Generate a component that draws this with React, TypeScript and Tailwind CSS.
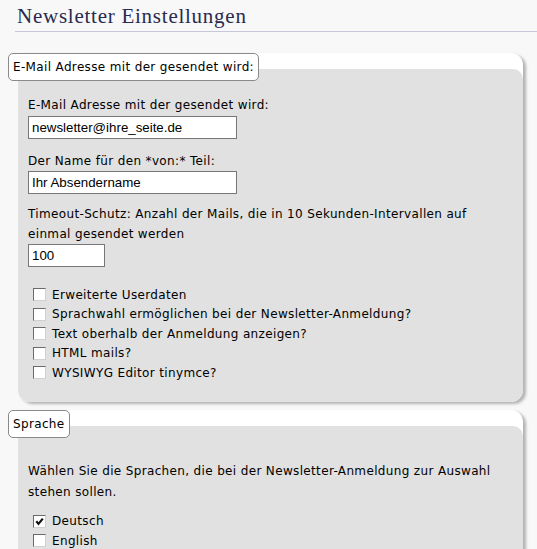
import React from 'react';

const Box: React.FC<{ checked?: boolean }> = ({ checked }) => (
  <span className="relative inline-block w-[13px] h-[13px] bg-white border border-t-[#6a6a6a] border-l-[#6a6a6a] border-r-[#d0d0d0] border-b-[#d0d0d0] shrink-0">
    {checked && (
      <svg viewBox="0 0 11 11" className="absolute inset-0 w-[11px] h-[11px]">
        <path d="M2.3 5.3 L4.5 7.9 L8.8 2.6" stroke="#111" strokeWidth="2.2" fill="none" />
      </svg>
    )}
  </span>
);

const CheckRow: React.FC<{ label: string; checked?: boolean }> = ({ label, checked }) => (
  <div className="flex items-center h-[19.5px] pl-[5px] gap-[6px]">
    <Box checked={checked} />
    <span>{label}</span>
  </div>
);

const Panel: React.FC<{ legend: string; children: React.ReactNode; pt: string }> = ({ legend, children, pt }) => (
  <div className="relative ml-[18px] w-[505px] pt-[16px] bg-white rounded-tr-[12px] rounded-b-[12px] shadow-[3px_2px_3px_rgba(0,0,0,0.28)]">
    <div className="absolute left-[-10px] top-0 h-[28px] px-[4px] flex items-center bg-white border border-[#8a8a8a] rounded-[5px] z-10">
      {legend}
    </div>
    <div className="bg-[#e1e1e1] rounded-tr-[10px] rounded-b-[12px] px-[10px]" style={{ paddingTop: pt }}>
      {children}
    </div>
  </div>
);

const inputCls =
  "block h-[23px] bg-white border border-[#777] px-[3px] text-[13.3px] tracking-normal text-black outline-none";
const inputFont = { fontFamily: '"Liberation Sans", Arial, sans-serif' };

export default function App() {
  return (
    <div
      className="w-[537px] h-[549px] overflow-hidden bg-[#f8f8f8] text-black text-[12px] leading-[20px] tracking-[0.35px]"
      style={{ fontFamily: '"DejaVu Sans", Verdana, sans-serif' }}
    >
      <div className="pl-[15px] pt-[3px]">
        <h1
          className="pl-[2px] text-[21px] leading-[26px] tracking-[0.75px] text-[#2a2a50]"
          style={{ fontFamily: '"Liberation Serif", "Times New Roman", serif' }}
        >
          Newsletter Einstellungen
        </h1>
        <div className="mt-[2px] h-px bg-[#c8c8dc]" />
      </div>

      <div className="pt-[21px]">
        <Panel legend="E-Mail Adresse mit der gesendet wird:" pt="26px">
          <div>E-Mail Adresse mit der gesendet wird:</div>
          <input className={inputCls + " w-[209px] mt-px"} defaultValue="newsletter@ihre_seite.de" style={inputFont} />
          <div className="mt-[12px]">Der Name für den *von:* Teil:</div>
          <input className={inputCls + " w-[209px]"} defaultValue="Ihr Absendername" style={inputFont} />
          <div className="mt-[10px]">
            Timeout-Schutz: Anzahl der Mails, die in 10 Sekunden-Intervallen auf
            <br />
            einmal gesendet werden
          </div>
          <input className={inputCls + " w-[77px]"} defaultValue="100" style={inputFont} />
          <div className="mt-[18px] pb-[19px]">
            <CheckRow label="Erweiterte Userdaten" />
            <CheckRow label="Sprachwahl ermöglichen bei der Newsletter-Anmeldung?" />
            <CheckRow label="Text oberhalb der Anmeldung anzeigen?" />
            <CheckRow label="HTML mails?" />
            <CheckRow label="WYSIWYG Editor tinymce?" />
          </div>
        </Panel>
      </div>

      <div className="pt-[8px]">
        <Panel legend="Sprache" pt="35px">
          <div className="leading-[21px]">
            Wählen Sie die Sprachen, die bei der Newsletter-Anmeldung zur Auswahl
            <br />
            stehen sollen.
          </div>
          <div className="mt-[9px] pb-[20px]">
            <CheckRow label="Deutsch" checked />
            <CheckRow label="English" />
          </div>
        </Panel>
      </div>
    </div>
  );
}
